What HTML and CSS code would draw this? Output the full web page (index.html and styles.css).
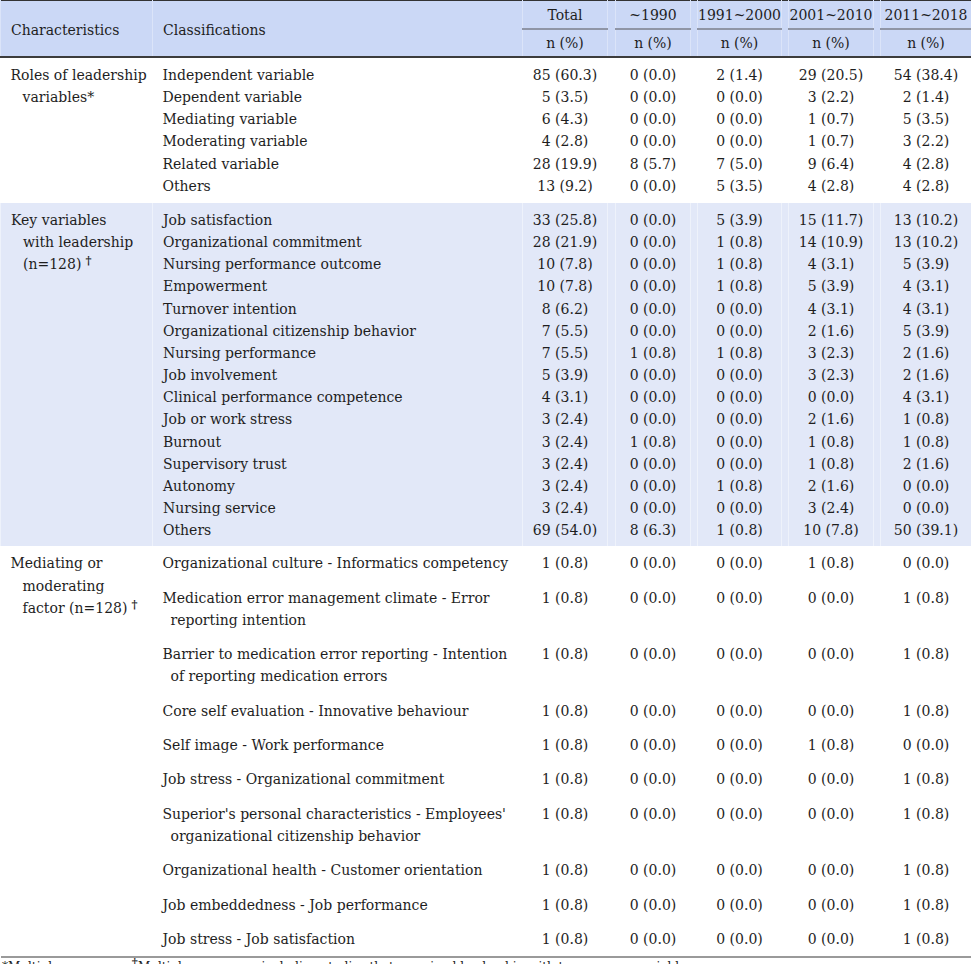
FILE: index.html
```html
<!DOCTYPE html>
<html lang="en">
<head>
<meta charset="utf-8">
<title>Characteristics of leadership variables</title>
<link rel="stylesheet" href="styles.css">
</head>
<body>
<table class="tbl">
  <colgroup>
    <col class="c-char"><col class="c-class"><col class="c-total"><col class="c-sp1"><col class="c-y1"><col class="c-sp2"><col class="c-y2"><col class="c-sp3"><col class="c-y3"><col class="c-sp4"><col class="c-y4">
  </colgroup>
  <thead>
    <tr class="h1">
      <th rowspan="2" class="lbl">Characteristics</th>
      <th rowspan="2" class="lbl">Classifications</th>
      <th class="grp">Total</th>
      <th rowspan="2" class="sp"></th>
      <th class="grp">~1990</th>
      <th rowspan="2" class="sp"></th>
      <th class="grp">1991~2000</th>
      <th rowspan="2" class="sp"></th>
      <th class="grp">2001~2010</th>
      <th rowspan="2" class="sp"></th>
      <th class="grp">2011~2018</th>
    </tr>
    <tr class="h2">
      <th>n (%)</th><th>n (%)</th><th>n (%)</th><th>n (%)</th><th>n (%)</th>
    </tr>
  </thead>
  <tbody class="sec tight">
    <tr class="first"><td rowspan="6" class="ch">Roles of leadership<br>variables*</td><td class="cl">Independent variable</td><td>85 (60.3)</td><td></td><td>0 (0.0)</td><td></td><td>2 (1.4)</td><td></td><td>29 (20.5)</td><td></td><td>54 (38.4)</td></tr>
    <tr><td class="cl">Dependent variable</td><td>5 (3.5)</td><td></td><td>0 (0.0)</td><td></td><td>0 (0.0)</td><td></td><td>3 (2.2)</td><td></td><td>2 (1.4)</td></tr>
    <tr><td class="cl">Mediating variable</td><td>6 (4.3)</td><td></td><td>0 (0.0)</td><td></td><td>0 (0.0)</td><td></td><td>1 (0.7)</td><td></td><td>5 (3.5)</td></tr>
    <tr><td class="cl">Moderating variable</td><td>4 (2.8)</td><td></td><td>0 (0.0)</td><td></td><td>0 (0.0)</td><td></td><td>1 (0.7)</td><td></td><td>3 (2.2)</td></tr>
    <tr><td class="cl">Related variable</td><td>28 (19.9)</td><td></td><td>8 (5.7)</td><td></td><td>7 (5.0)</td><td></td><td>9 (6.4)</td><td></td><td>4 (2.8)</td></tr>
    <tr class="last"><td class="cl">Others</td><td>13 (9.2)</td><td></td><td>0 (0.0)</td><td></td><td>5 (3.5)</td><td></td><td>4 (2.8)</td><td></td><td>4 (2.8)</td></tr>
  </tbody>
  <tbody class="sec tight shade">
    <tr class="first"><td rowspan="15" class="ch">Key variables<br>with leadership<br>(n=128)<sup class="dag">&nbsp;†</sup></td><td class="cl">Job satisfaction</td><td>33 (25.8)</td><td></td><td>0 (0.0)</td><td></td><td>5 (3.9)</td><td></td><td>15 (11.7)</td><td></td><td>13 (10.2)</td></tr>
    <tr><td class="cl">Organizational commitment</td><td>28 (21.9)</td><td></td><td>0 (0.0)</td><td></td><td>1 (0.8)</td><td></td><td>14 (10.9)</td><td></td><td>13 (10.2)</td></tr>
    <tr><td class="cl">Nursing performance outcome</td><td>10 (7.8)</td><td></td><td>0 (0.0)</td><td></td><td>1 (0.8)</td><td></td><td>4 (3.1)</td><td></td><td>5 (3.9)</td></tr>
    <tr><td class="cl">Empowerment</td><td>10 (7.8)</td><td></td><td>0 (0.0)</td><td></td><td>1 (0.8)</td><td></td><td>5 (3.9)</td><td></td><td>4 (3.1)</td></tr>
    <tr><td class="cl">Turnover intention</td><td>8 (6.2)</td><td></td><td>0 (0.0)</td><td></td><td>0 (0.0)</td><td></td><td>4 (3.1)</td><td></td><td>4 (3.1)</td></tr>
    <tr><td class="cl">Organizational citizenship behavior</td><td>7 (5.5)</td><td></td><td>0 (0.0)</td><td></td><td>0 (0.0)</td><td></td><td>2 (1.6)</td><td></td><td>5 (3.9)</td></tr>
    <tr><td class="cl">Nursing performance</td><td>7 (5.5)</td><td></td><td>1 (0.8)</td><td></td><td>1 (0.8)</td><td></td><td>3 (2.3)</td><td></td><td>2 (1.6)</td></tr>
    <tr><td class="cl">Job involvement</td><td>5 (3.9)</td><td></td><td>0 (0.0)</td><td></td><td>0 (0.0)</td><td></td><td>3 (2.3)</td><td></td><td>2 (1.6)</td></tr>
    <tr><td class="cl">Clinical performance competence</td><td>4 (3.1)</td><td></td><td>0 (0.0)</td><td></td><td>0 (0.0)</td><td></td><td>0 (0.0)</td><td></td><td>4 (3.1)</td></tr>
    <tr><td class="cl">Job or work stress</td><td>3 (2.4)</td><td></td><td>0 (0.0)</td><td></td><td>0 (0.0)</td><td></td><td>2 (1.6)</td><td></td><td>1 (0.8)</td></tr>
    <tr><td class="cl">Burnout</td><td>3 (2.4)</td><td></td><td>1 (0.8)</td><td></td><td>0 (0.0)</td><td></td><td>1 (0.8)</td><td></td><td>1 (0.8)</td></tr>
    <tr><td class="cl">Supervisory trust</td><td>3 (2.4)</td><td></td><td>0 (0.0)</td><td></td><td>0 (0.0)</td><td></td><td>1 (0.8)</td><td></td><td>2 (1.6)</td></tr>
    <tr><td class="cl">Autonomy</td><td>3 (2.4)</td><td></td><td>0 (0.0)</td><td></td><td>1 (0.8)</td><td></td><td>2 (1.6)</td><td></td><td>0 (0.0)</td></tr>
    <tr><td class="cl">Nursing service</td><td>3 (2.4)</td><td></td><td>0 (0.0)</td><td></td><td>0 (0.0)</td><td></td><td>3 (2.4)</td><td></td><td>0 (0.0)</td></tr>
    <tr class="last"><td class="cl">Others</td><td>69 (54.0)</td><td></td><td>8 (6.3)</td><td></td><td>1 (0.8)</td><td></td><td>10 (7.8)</td><td></td><td>50 (39.1)</td></tr>
  </tbody>
  <tbody class="sec loose">
    <tr><td rowspan="10" class="ch">Mediating or<br>moderating<br>factor (n=128)<sup class="dag">&nbsp;†</sup></td><td class="cl">Organizational culture - Informatics competency</td><td>1 (0.8)</td><td></td><td>0 (0.0)</td><td></td><td>0 (0.0)</td><td></td><td>1 (0.8)</td><td></td><td>0 (0.0)</td></tr>
    <tr><td class="cl">Medication error management climate - Error<br>reporting intention</td><td>1 (0.8)</td><td></td><td>0 (0.0)</td><td></td><td>0 (0.0)</td><td></td><td>0 (0.0)</td><td></td><td>1 (0.8)</td></tr>
    <tr><td class="cl">Barrier to medication error reporting - Intention<br>of reporting medication errors</td><td>1 (0.8)</td><td></td><td>0 (0.0)</td><td></td><td>0 (0.0)</td><td></td><td>0 (0.0)</td><td></td><td>1 (0.8)</td></tr>
    <tr><td class="cl">Core self evaluation - Innovative behaviour</td><td>1 (0.8)</td><td></td><td>0 (0.0)</td><td></td><td>0 (0.0)</td><td></td><td>0 (0.0)</td><td></td><td>1 (0.8)</td></tr>
    <tr><td class="cl">Self image - Work performance</td><td>1 (0.8)</td><td></td><td>0 (0.0)</td><td></td><td>0 (0.0)</td><td></td><td>1 (0.8)</td><td></td><td>0 (0.0)</td></tr>
    <tr><td class="cl">Job stress - Organizational commitment</td><td>1 (0.8)</td><td></td><td>0 (0.0)</td><td></td><td>0 (0.0)</td><td></td><td>0 (0.0)</td><td></td><td>1 (0.8)</td></tr>
    <tr><td class="cl">Superior's personal characteristics - Employees'<br>organizational citizenship behavior</td><td>1 (0.8)</td><td></td><td>0 (0.0)</td><td></td><td>0 (0.0)</td><td></td><td>0 (0.0)</td><td></td><td>1 (0.8)</td></tr>
    <tr><td class="cl">Organizational health - Customer orientation</td><td>1 (0.8)</td><td></td><td>0 (0.0)</td><td></td><td>0 (0.0)</td><td></td><td>0 (0.0)</td><td></td><td>1 (0.8)</td></tr>
    <tr><td class="cl">Job embeddedness - Job performance</td><td>1 (0.8)</td><td></td><td>0 (0.0)</td><td></td><td>0 (0.0)</td><td></td><td>0 (0.0)</td><td></td><td>1 (0.8)</td></tr>
    <tr><td class="cl">Job stress - Job satisfaction</td><td>1 (0.8)</td><td></td><td>0 (0.0)</td><td></td><td>0 (0.0)</td><td></td><td>0 (0.0)</td><td></td><td>1 (0.8)</td></tr>
  </tbody>
</table>
<p class="foot">*Multiple responses; <sup class="dag">†</sup>Multiple responses, including studies that examined leadership with two or more variables.</p>
</body>
</html>
```

FILE: styles.css
```css
html, body {
  margin: 0;
  padding: 0;
  background: #ffffff;
}

body {
  font-family: "DejaVu Serif", "Liberation Serif", serif;
  font-size: 14px;
  color: #1e1e1e;
}

.tbl {
  width: 971px;
  table-layout: fixed;
  border-collapse: collapse;
  border-top: 1px solid #333;
  border-bottom: 2px solid #9a9a9a;
}

.c-char { width: 152px; }
.c-class { width: 370px; }
.c-total { width: 85px; }
.c-sp1 { width: 8px; }
.c-y1 { width: 75px; }
.c-sp2 { width: 7px; }
.c-y2 { width: 84px; }
.c-sp3 { width: 7px; }
.c-y3 { width: 85px; }
.c-sp4 { width: 7px; }
.c-y4 { width: 91px; }

th, td {
  padding: 0;
  font-weight: normal;
  text-align: center;
  vertical-align: top;
  line-height: 22.15px;
  white-space: nowrap;
}

thead th {
  background: #cbd8f6;
  border-left: 1px solid #dbe4f9;
  border-right: 1px solid #dbe4f9;
  vertical-align: middle;
  line-height: 20px;
}

thead {
  border-bottom: 2px solid #3c3c3c;
}

.h1 th { height: 27px; }
.h2 th { height: 26px; }

.h1 .grp {
  border-bottom: 2px solid #8f95a6;
}

thead .lbl {
  text-align: left;
  padding-left: 10px;
  padding-top: 2px;
}

td.ch {
  text-align: left;
  padding-left: 22px;
  text-indent: -12px;
  line-height: 22px;
}

td.cl {
  text-align: left;
  padding-left: 18px;
  text-indent: -8px;
}

.tight .first td { padding-top: 6px; }
.tight .last td { padding-bottom: 6px; }
.shade .last td { padding-bottom: 5px; }
.tight .first td.ch { padding-top: 6px; padding-bottom: 0; }

.loose td {
  padding-top: 6px;
  padding-bottom: 6px;
  line-height: 22.3px;
}

.loose td.ch { line-height: 22.5px; }

.shade td {
  background: #e2e8f8;
  border-left: 1px solid #eef2fb;
  border-right: 1px solid #eef2fb;
}

.dag {
  font-size: 11.5px;
  font-weight: bold;
  vertical-align: 5px;
  line-height: 0;
}

.foot {
  margin: 1px 0 0 0;
  padding-left: 2px;
  font-size: 12px;
  line-height: 16px;
}
```
